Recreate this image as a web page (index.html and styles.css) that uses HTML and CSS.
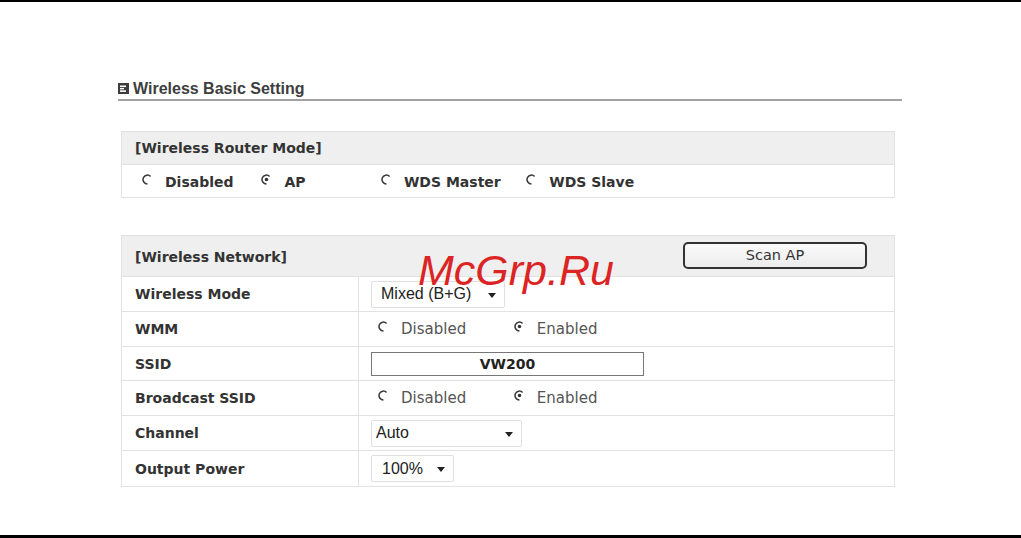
FILE: index.html
```html
<!DOCTYPE html>
<html lang="en">

<head>
	<meta charset="UTF-8" />
	<title>Wireless Basic Setting</title>
	<link rel="stylesheet" href="styles.css">
</head>

<body>
	<div class="page">
		<div class="content">
			<div class="title">
				<svg class="title-icon" width="11" height="11" viewBox="0 0 11 11">
					<rect x="0" y="0" width="11" height="11" fill="#3c3c3c" />
					<rect x="2" y="2.5" width="6" height="1.6" fill="#fff" />
					<rect x="2" y="5" width="4" height="1.4" fill="#fff" />
					<rect x="2" y="7.3" width="6" height="1.6" fill="#fff" />
				</svg>
				<span>Wireless Basic Setting</span>
			</div>

			<table class="panel mode-panel">
				<tr class="head">
					<td>[Wireless Router Mode]</td>
				</tr>
				<tr>
					<td class="mode-row">
						<span class="opt bold"><svg class="radio" viewBox="0 0 10 10"><path d="M7.8 2.2 A4 4 0 1 0 5 9" /></svg>Disabled</span>
						<span class="opt bold"><svg class="radio" viewBox="0 0 10 10"><path d="M7.8 2.2 A4 4 0 1 0 5 9" /><circle cx="5" cy="5" r="1.6" /></svg>AP</span>
						<span class="opt bold"><svg class="radio" viewBox="0 0 10 10"><path d="M7.8 2.2 A4 4 0 1 0 5 9" /></svg>WDS Master</span>
						<span class="opt bold"><svg class="radio" viewBox="0 0 10 10"><path d="M7.8 2.2 A4 4 0 1 0 5 9" /></svg>WDS Slave</span>
					</td>
				</tr>
			</table>

			<table class="panel net-panel">
				<tr class="head">
					<td colspan="2">
						<div class="head-bar">
							<span>[Wireless Network]</span>
							<button class="scan-button">Scan AP</button>
						</div>
					</td>
				</tr>
				<tr>
					<td class="label">Wireless Mode</td>
					<td class="value"><div class="select sel-mode">Mixed (B+G)<i class="caret"></i></div></td>
				</tr>
				<tr>
					<td class="label">WMM</td>
					<td class="value">
						<div class="radios">
							<span class="opt wide"><svg class="radio" viewBox="0 0 10 10"><path d="M7.8 2.2 A4 4 0 1 0 5 9" /></svg>Disabled</span>
							<span class="opt wide"><svg class="radio" viewBox="0 0 10 10"><path d="M7.8 2.2 A4 4 0 1 0 5 9" /><circle cx="5" cy="5" r="1.6" /></svg>Enabled</span>
						</div>
					</td>
				</tr>
				<tr class="short">
					<td class="label">SSID</td>
					<td class="value"><div class="text-input">VW200</div></td>
				</tr>
				<tr>
					<td class="label">Broadcast SSID</td>
					<td class="value">
						<div class="radios">
							<span class="opt wide"><svg class="radio" viewBox="0 0 10 10"><path d="M7.8 2.2 A4 4 0 1 0 5 9" /></svg>Disabled</span>
							<span class="opt wide"><svg class="radio" viewBox="0 0 10 10"><path d="M7.8 2.2 A4 4 0 1 0 5 9" /><circle cx="5" cy="5" r="1.6" /></svg>Enabled</span>
						</div>
					</td>
				</tr>
				<tr>
					<td class="label">Channel</td>
					<td class="value"><div class="select sel-channel">Auto<i class="caret"></i></div></td>
				</tr>
				<tr class="last">
					<td class="label">Output Power</td>
					<td class="value"><div class="select sel-power">100%<i class="caret"></i></div></td>
				</tr>
			</table>
		</div>

		<div class="watermark">McGrp.Ru</div>
	</div>
</body>

</html>
```

FILE: styles.css
```css
body {
	margin: 0;
	background: #fff;
	font-family: "DejaVu Sans", Verdana, sans-serif;
	color: #333;
}

.page {
	position: relative;
	height: 538px;
	box-sizing: border-box;
	border-top: 2px solid #000;
	border-bottom: 3px solid #000;
	overflow: hidden;
}

.content {
	width: 784px;
	margin-left: 118px;
	padding-top: 76px;
}

.title {
	display: flex;
	align-items: center;
	gap: 4px;
	height: 21px;
	border-bottom: 2px solid #a2a2a2;
	font-family: "Liberation Sans", Arial, sans-serif;
	font-weight: bold;
	font-size: 16px;
	color: #3e3e3e;
}

.title-icon {
	margin-top: -1px;
}

.panel {
	width: 774px;
	margin-left: 3px;
	border-collapse: collapse;
	border: 1px solid #dedede;
	font-size: 14px;
}

.panel td {
	padding: 0;
	border: 1px solid #e2e2e2;
}

.mode-panel {
	margin-top: 30px;
}

.net-panel {
	margin-top: 37px;
}

.head td {
	background: #efefef;
	font-weight: bold;
	color: #333;
	padding-left: 13px;
}

.mode-panel tr {
	height: 33px;
}

.net-panel .head {
	height: 41px;
}

.net-panel tr {
	height: 35px;
}

.net-panel tr.short {
	height: 34px;
}

.net-panel tr.last {
	height: 36px;
}

.head-bar {
	display: flex;
	justify-content: space-between;
	align-items: center;
	padding-right: 27px;
	padding-top: 2px;
}

.scan-button {
	width: 184px;
	height: 27px;
	margin-top: -4px;
	border: 2px solid #333;
	border-radius: 5px;
	background: linear-gradient(#fafafa, #ececec);
	font-family: "DejaVu Sans", Verdana, sans-serif;
	font-size: 14.5px;
	color: #333;
	padding: 0;
}

.mode-row {
	padding-left: 20px !important;
}

.opt {
	display: inline-flex;
	align-items: center;
	box-sizing: border-box;
	min-width: 115px;
	padding-right: 21px;
	vertical-align: middle;
}

.opt.bold {
	font-weight: bold;
	color: #333;
}

.radio {
	width: 11px;
	height: 11px;
	margin-right: 12px;
	margin-top: -5px;
	fill: none;
	stroke: #3a3a3a;
	stroke-width: 1.4;
}

.radio circle {
	fill: #333;
	stroke: none;
}

.label {
	width: 223px;
	padding-left: 13px !important;
	font-weight: bold;
	color: #333;
}

.value {
	padding-left: 12px !important;
}

.radios {
	padding-left: 7px;
	font-size: 15px;
	color: #555;
}

.opt.wide {
	min-width: 131px;
}

.select {
	position: relative;
	display: inline-flex;
	align-items: center;
	box-sizing: border-box;
	height: 27px;
	padding-left: 9px;
	border: 1px solid #e0e0e0;
	border-radius: 2px;
	font-family: "Liberation Sans", Arial, sans-serif;
	font-size: 16px;
	color: #222;
	vertical-align: middle;
}

.sel-mode {
	width: 134px;
}

.sel-channel {
	width: 151px;
	padding-left: 4px;
}

.sel-power {
	width: 83px;
	padding-left: 10px;
}

.caret {
	position: absolute;
	right: 8px;
	top: 11px;
	width: 0;
	height: 0;
	border-left: 4px solid transparent;
	border-right: 4px solid transparent;
	border-top: 5px solid #222;
}

.text-input {
	box-sizing: border-box;
	width: 273px;
	height: 24px;
	line-height: 22px;
	border: 1px solid #777;
	text-align: center;
	font-weight: bold;
	font-size: 14px;
	color: #222;
}

.watermark {
	position: absolute;
	left: 418px;
	top: 244px;
	font-family: "Liberation Sans", Arial, sans-serif;
	font-style: italic;
	font-size: 43px;
	color: #dc2424;
	line-height: 1.15;
}
```
